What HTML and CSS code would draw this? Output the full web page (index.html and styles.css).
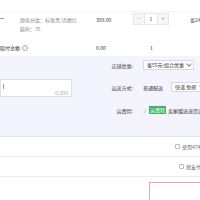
FILE: index.html
```html
<!DOCTYPE html>
<html>
<head>
<meta charset="utf-8">
<link rel="stylesheet" href="styles.css">
</head>
<body>
<div class="page">
  <div class="item-row">
    <div class="c-thumb"><span class="dash"></span></div>
    <div class="c-info">
      <div class="sku">颜色分类：标准黑/赤膛红</div>
      <div class="sku">鞋码：35</div>
    </div>
    <div class="c-price">399.00</div>
    <div class="c-qty">
      <div class="stepper"><span class="btn">−</span><span class="num">1</span><span class="btn">+</span></div>
    </div>
    <div class="c-sum">省24.00</div>
  </div>
  <div class="ins-row">
    <div class="c-label">赔付金额<span class="q">?</span></div>
    <div class="c-price">0.00</div>
    <div class="c-count">1</div>
  </div>
  <div class="extra">
    <div class="memo">
      <div class="memo-box"><span class="caret"></span><span class="count">0/200</span></div>
    </div>
    <div class="opts">
      <div class="opt opt-1">
        <span class="lbl">店铺优惠:</span>
        <span class="sel sel-1">省55元:组合优惠<span class="chev"></span></span>
      </div>
      <div class="opt opt-2">
        <span class="lbl">运送方式:</span>
        <span class="val">普通配送</span>
        <span class="sel sel-2">快递 免邮<span class="chev"></span></span>
      </div>
      <div class="opt opt-3">
        <span class="lbl">运费险:</span>
        <span class="tick">✓</span>
        <span class="badge">运费险</span>
        <span class="val">卖家赠送退货运费险</span>
      </div>
    </div>
  </div>
  <div class="check-row row-a"><span class="box"></span><span class="ctext">使用474淘金币抵扣</span></div>
  <div class="check-row row-b"><span class="box"></span><span class="ctext">朋友代付</span></div>
  <div class="summary"></div>
</div>
</body>
</html>
```
FILE: styles.css
```css
html, body {
  margin: 0;
  padding: 0;
  background: #fff;
  overflow: hidden;
}
body {
  width: 200px;
  height: 200px;
}
.page {
  width: 260px;
  padding-top: 11px;
  font-family: "Noto Sans CJK SC", "Noto Sans", sans-serif;
  font-size: 5px;
  color: #333;
}
.item-row {
  display: flex;
  height: 22px;
  border-top: 1px solid #f4f4f4;
}
.c-thumb {
  width: 20px;
  padding-top: 6px;
}
.dash {
  display: block;
  width: 4px;
  height: 1px;
  background: #999;
}
.c-info {
  width: 76px;
  padding-top: 3px;
  color: #888;
}
.sku {
  height: 9px;
  line-height: 9px;
}
.c-price {
  width: 37px;
  padding-top: 3px;
  line-height: 9px;
}
.c-qty {
  width: 57px;
  padding-top: 1px;
}
.stepper {
  display: flex;
  width: 36px;
  height: 12px;
  border: 1px solid #e6e6e6;
  box-sizing: border-box;
}
.stepper .btn {
  width: 10px;
  background: #f7f7f7;
  color: #999;
  text-align: center;
  line-height: 10px;
  font-size: 6px;
}
.stepper .num {
  flex: 1;
  text-align: center;
  line-height: 10px;
  border-left: 1px solid #e6e6e6;
  border-right: 1px solid #e6e6e6;
}
.c-sum {
  padding-top: 3px;
  line-height: 9px;
  color: #555;
}
.ins-row {
  display: flex;
  height: 22px;
  align-items: flex-end;
  box-sizing: border-box;
}
.ins-row > div {
  line-height: 9px;
  padding-bottom: 4px;
  padding-top: 0;
}
.c-label {
  width: 96px;
  display: flex;
  align-items: center;
}
.q {
  margin-left: 2px;
  width: 4px;
  height: 4px;
  border: 1px solid #aab;
  border-radius: 50%;
  font-size: 3px;
  line-height: 4px;
  text-align: center;
  color: #99a;
}
.c-count {
  padding-left: 17px;
}
.extra {
  display: flex;
  height: 80px;
  background: #f3f4fe;
  border-bottom: 1px solid #e2e3ea;
}
.memo {
  width: 72px;
  padding-top: 23px;
}
.memo-box {
  position: relative;
  height: 18px;
  background: #fff;
  border: 1px solid #e0e0e6;
  box-sizing: border-box;
}
.caret {
  position: absolute;
  left: 2px;
  top: 4px;
  width: 1px;
  height: 5px;
  background: #999;
}
.count {
  position: absolute;
  right: 3px;
  bottom: 0;
  color: #aaa;
  line-height: 7px;
}
.opts {
  margin-left: 31px;
  padding-top: 4px;
  display: flex;
  flex-direction: column;
}
.opt {
  display: flex;
  align-items: center;
  height: 10px;
}
.opt-2 { margin-top: 12px; }
.opt-3 { margin-top: 13px; }
.lbl {
  width: 30px;
  text-align: right;
  margin-right: 10px;
  color: #444;
}
.sel {
  position: relative;
  display: block;
  height: 10px;
  line-height: 8px;
  border: 1px solid #d8d8de;
  background: #fff;
  box-sizing: border-box;
  padding-left: 3px;
}
.sel-1 { width: 51px; }
.sel-2 { width: 40px; margin-left: 8px; }
.chev {
  position: absolute;
  top: 1px;
  width: 3px;
  height: 3px;
  border-right: 1px solid #888;
  border-bottom: 1px solid #888;
  transform: rotate(45deg);
}
.sel-1 .chev { left: 43px; }
.sel-2 .chev { left: 28px; }
.tick {
  color: #999;
  width: 6px;
  font-size: 5px;
}
.badge {
  background: #3eb45c;
  color: #fff;
  padding: 0 1px;
  line-height: 8px;
  height: 8px;
  margin-right: 2px;
}
.check-row {
  display: flex;
  align-items: center;
  height: 19px;
  border-bottom: 1px solid #ececf0;
  color: #666;
}
.row-a { padding-left: 175px; }
.row-b { padding-left: 179px; }
.box {
  width: 5px;
  height: 5px;
  border: 1px solid #bbb;
  border-radius: 1px;
  background: #fff;
  box-sizing: border-box;
  margin-right: 2px;
}
.summary {
  margin-top: 5px;
  margin-left: 149px;
  width: 100px;
  height: 40px;
  border: 1px solid #eeaaaa;
}
```
